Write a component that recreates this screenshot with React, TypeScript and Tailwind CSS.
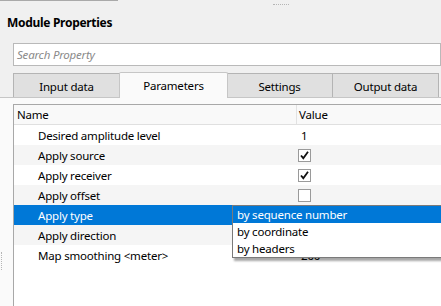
import React from "react";

type Row = {
  name: string;
  value?: string;
  check?: boolean;
  selected?: boolean;
};

const rows: Row[] = [
  { name: "Desired amplitude level", value: "1" },
  { name: "Apply source", check: true },
  { name: "Apply receiver", check: true },
  { name: "Apply offset", check: false },
  { name: "Apply type", selected: true },
  { name: "Apply direction", check: false },
  { name: "Map smoothing <meter>", value: "200" },
];

const tabs = ["Input data", "Parameters", "Settings", "Output data"];

const CheckBox = ({ checked }: { checked: boolean }) => (
  <div className="w-[13px] h-[13px] border border-[#9a9a9a] bg-white flex items-center justify-center">
    {checked && (
      <svg width="11" height="11" viewBox="0 0 11 11">
        <path d="M2 5.5 L4.3 8.2 L9 1.8" fill="none" stroke="#111" strokeWidth="1.8" />
      </svg>
    )}
  </div>
);

const App = () => {
  return (
    <div className="relative w-[441px] h-[306px] overflow-hidden bg-[#f0f0f0] text-[11.5px] tracking-[-0.2px] leading-4 text-black font-['Segoe_UI','Noto_Sans',sans-serif]">
      {/* leftover edge of the panel above */}
      <div className="h-px w-[118px] bg-[#a9a9a9]" />
      {/* splitter grips */}
      <div className="absolute top-[4px] left-[273px] w-[16px] border-t border-dotted border-[#b5b5b5]" />
      <div className="absolute top-[252px] left-[1px] h-[18px] border-l border-dotted border-[#b5b5b5]" />

      <div className="pl-[7px] pt-[14px] h-[30px] font-bold text-[12px] tracking-[-0.3px]">Module Properties</div>

      <div className="ml-[13px] mt-[12px] h-[23px] border border-[#b9b9b9] bg-white flex items-center pl-[3px] pt-px italic text-[#8a8a8a]">
        Search Property
      </div>

      {/* tab bar */}
      <div className="ml-[13px] mt-[6px] h-[25px] flex items-end">
        {tabs.map((t, i) =>
          i === 1 ? (
            <div
              key={t}
              className="relative z-10 -mx-px -mb-px w-[109px] h-[26px] pt-px bg-[#fafafa] border border-b-0 border-[#c6c6c6] rounded-t-[2px] flex items-center justify-center"
            >
              {t}
            </div>
          ) : (
            <div
              key={t}
              className="w-[107px] h-[24px] pt-[2px] bg-[#e0e0e0] border border-b-0 border-[#b4b4b4] -ml-px first:ml-0 flex items-center justify-center"
            >
              {t}
            </div>
          )
        )}
      </div>

      {/* tab pane */}
      <div className="border-t border-[#c6c6c6] bg-[#fafafa] pt-[6px] pl-[13px]">
        <div className="w-[460px] border-l border-t border-[#a8a8a8] bg-white">
          <div className="flex h-[20px] bg-[#f9f9f9] border-b border-[#e0e0e0]">
            <div className="w-[283px] pl-[3px] pt-px flex items-center border-r border-[#e2e2e2]">Name</div>
            <div className="pl-[2px] pt-px flex items-center">Value</div>
          </div>
          {rows.map((r, i) => (
            <div
              key={r.name}
              className={
                "flex h-[20px] " +
                (r.selected ? "bg-[#0078d7] text-white" : i % 2 === 1 ? "bg-[#f5f5f5]" : "bg-white")
              }
            >
              <div className="w-[284px] pl-[24px] pt-[2px] flex items-center">{r.name}</div>
              <div className="flex items-center">
                {r.value !== undefined && <span className="pl-[3px] pt-[2px]">{r.value}</span>}
                {r.check !== undefined && <CheckBox checked={r.check} />}
              </div>
            </div>
          ))}
          <div className="h-[60px]" />
        </div>
      </div>

      {/* combo popup */}
      <div className="absolute left-[232px] top-[205px] w-[230px] border border-[#7a7a7a] bg-white shadow-[2px_3px_2px_rgba(0,0,0,0.35)]">
        <div className="h-[17px] pl-[4px] pt-px flex items-center bg-[#0078d7] text-white">by sequence number</div>
        <div className="h-[17px] pl-[4px] pt-px flex items-center">by coordinate</div>
        <div className="h-[17px] pl-[4px] pt-px flex items-center">by headers</div>
      </div>
    </div>
  );
};

export default App;
